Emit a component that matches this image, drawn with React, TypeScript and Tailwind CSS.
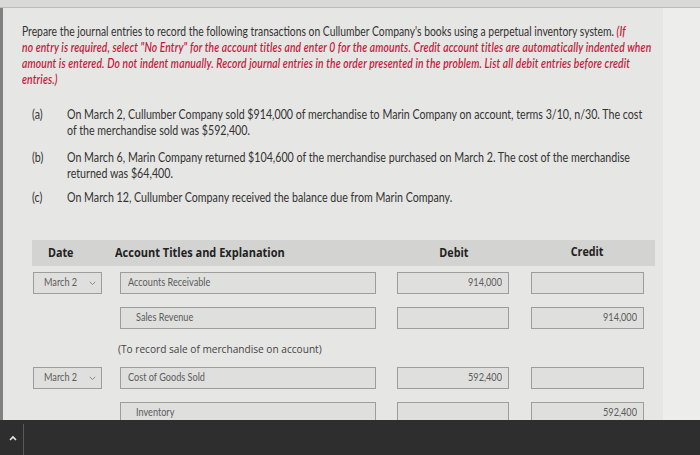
import React from 'react';

type Row = {
  date?: string;
  account: string;
  indent?: boolean;
  debit?: string;
  credit?: string;
};

const rowsA: Row[] = [
  { date: 'March 2', account: 'Accounts Receivable', debit: '914,000' },
  { account: 'Sales Revenue', indent: true, credit: '914,000' },
];

const rowsB: Row[] = [
  { date: 'March 2', account: 'Cost of Goods Sold', debit: '592,400' },
  { account: 'Inventory', indent: true, credit: '592,400' },
];

function Box({ children, className = '' }: { children?: React.ReactNode; className?: string }) {
  return (
    <div
      className={`h-[22px] flex items-center bg-[#dfdfdd] border border-[#9d9d9b] font-[Lato,sans-serif] text-[10.5px] text-[#5c5c5c] overflow-hidden ${className}`}
    >
      {children}
    </div>
  );
}

function JournalRow({ row, first }: { row: Row; first: boolean }) {
  return (
    <div className={`grid grid-cols-[80px_276px_132px_135px] ${first ? 'mt-[6px]' : 'mt-[13px]'}`}>
      <div>
        {row.date && (
          <Box className="ml-[1px] w-[69px] justify-between pl-[10px] pr-[5px]">
            <span className="inline-block whitespace-nowrap origin-left scale-x-[0.87]">{row.date}</span>
            <svg width="7" height="5" viewBox="0 0 7 5" className="text-[#8a8a8a]">
              <path d="M0.8 0.8 L3.5 3.6 L6.2 0.8" fill="none" stroke="currentColor" strokeWidth="1" />
            </svg>
          </Box>
        )}
      </div>
      <Box className={`ml-[8px] w-[256px] ${row.indent ? 'pl-[15px]' : 'pl-[7px]'}`}>
        <span className="inline-block whitespace-nowrap origin-left scale-x-[0.87]">{row.account}</span>
      </Box>
      <Box className="ml-[9px] w-[112px] justify-end pr-[6px]">
        {row.debit && <span className="inline-block whitespace-nowrap origin-right scale-x-[0.87]">{row.debit}</span>}
      </Box>
      <Box className="ml-[11px] w-[113px] justify-end pr-[6px]">
        {row.credit && <span className="inline-block whitespace-nowrap origin-right scale-x-[0.87]">{row.credit}</span>}
      </Box>
    </div>
  );
}

const items = [
  {
    label: '(a)',
    lines: [
      'On March 2, Cullumber Company sold $914,000 of merchandise to Marin Company on account, terms 3/10, n/30. The cost',
      'of the merchandise sold was $592,400.',
    ],
    mt: 'mt-[19px]',
  },
  {
    label: '(b)',
    lines: [
      'On March 6, Marin Company returned $104,600 of the merchandise purchased on March 2. The cost of the merchandise',
      'returned was $64,400.',
    ],
    mt: 'mt-[11px]',
  },
  {
    label: '(c)',
    lines: ['On March 12, Cullumber Company received the balance due from Marin Company.'],
    mt: 'mt-[8px]',
  },
];

export default function App() {
  return (
    <div className="w-[700px] h-[455px] flex flex-col overflow-hidden bg-[#e6e6e4]">
      {/* top strip */}
      <div className="h-[8px] shrink-0 bg-[#d9d9d7] border-b border-[#bcbcba]" />

      <div className="flex-1 min-h-0 flex">
        <div className="w-[3px] shrink-0 bg-[#808080]" />

        {/* main page */}
        <div className="flex-1 min-w-0 overflow-hidden">
          <p className="mt-[15px] ml-[19px] font-[Lato,sans-serif] text-[13px] leading-[16px] text-[#333] whitespace-nowrap origin-left scale-x-[0.795]">
            Prepare the journal entries to record the following transactions on Cullumber Company's books using a perpetual
            inventory system. <span className="italic font-semibold tracking-[0.16px] text-[#c8193c]">(If</span>
            <br />
            <span className="italic font-semibold tracking-[0.16px] text-[#c8193c]">
              no entry is required, select "No Entry" for the account titles and enter 0 for the amounts. Credit account titles are
              automatically indented when
              <br />
              amount is entered. Do not indent manually. Record journal entries in the order presented in the problem. List all debit
              entries before credit
              <br />
              entries.)
            </span>
          </p>

          {/* transactions */}
          {items.map((it) => (
            <div key={it.label} className={`${it.mt} ml-[29px] flex font-[Lato,sans-serif] text-[13px] leading-[16px] text-[#333]`}>
              <div className="w-[35px] shrink-0">
                <span className="inline-block origin-left scale-x-[0.82]">{it.label}</span>
              </div>
              <div className="whitespace-nowrap origin-left scale-x-[0.82]">
                {it.lines.map((l, i) => (
                  <div key={i}>{l}</div>
                ))}
              </div>
            </div>
          ))}

          {/* journal table */}
          <div className="mt-[35px] ml-[29px] w-[623px]">
            <div className="h-[26px] grid grid-cols-[80px_276px_132px_135px] items-center bg-[#d3d3d1] font-['Open_Sans',sans-serif] text-[12.5px] font-bold text-[#222]">
              <div className="pl-[16px]">
                <span className="inline-block whitespace-nowrap origin-left scale-x-[0.86]">Date</span>
              </div>
              <div className="pl-[3px]">
                <span className="inline-block whitespace-nowrap origin-left scale-x-[0.88]">Account Titles and Explanation</span>
              </div>
              <div className="text-center">
                <span className="inline-block whitespace-nowrap scale-x-[0.86]">Debit</span>
              </div>
              <div className="text-center pb-[2px]">
                <span className="inline-block whitespace-nowrap scale-x-[0.86]">Credit</span>
              </div>
            </div>

            {rowsA.map((r, i) => (
              <JournalRow key={'a' + i} row={r} first={i === 0} />
            ))}

            <div className="mt-[12px] ml-[86px] h-[16px] leading-[16px] font-['Open_Sans',sans-serif] text-[11.5px] text-[#444]">
              <span className="inline-block whitespace-nowrap origin-left scale-x-[0.88]">(To record sale of merchandise on account)</span>
            </div>

            <div className="mt-[-3px]">
              {rowsB.map((r, i) => (
                <JournalRow key={'b' + i} row={r} first={false} />
              ))}
            </div>
          </div>
        </div>

        <div className="w-[37px] shrink-0 bg-[#ededeb]" />
      </div>

      {/* taskbar */}
      <div className="h-[35px] shrink-0 flex bg-[#2e2e2e]">
        <div className="w-[23px] flex items-center justify-center pl-[3px]">
          <svg width="8" height="6" viewBox="0 0 8 6">
            <path d="M1 5 L4 2 L7 5" fill="none" stroke="#e8e8e8" strokeWidth="1.6" />
          </svg>
        </div>
        <div className="mt-[4px] w-px bg-[#5a5a5a]" />
      </div>
    </div>
  );
}
